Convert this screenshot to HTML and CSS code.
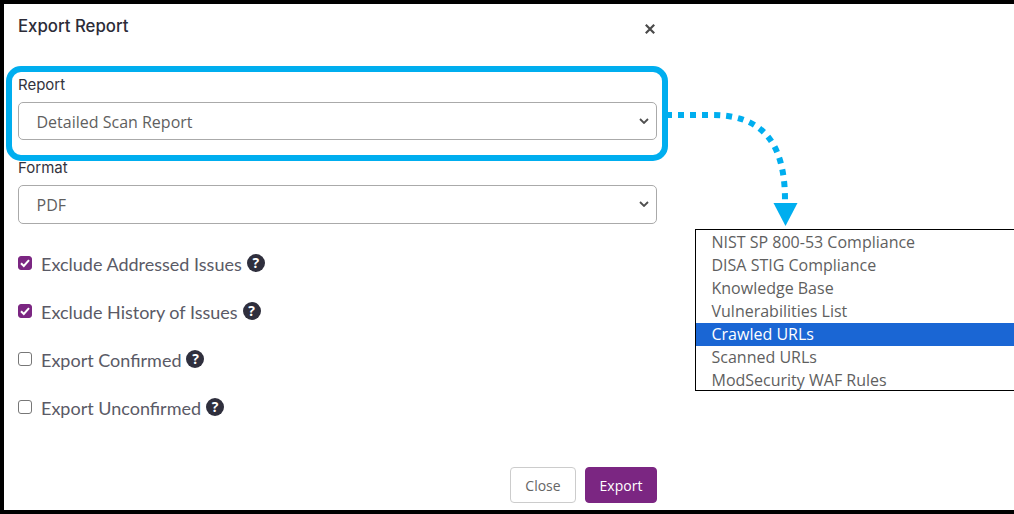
FILE: index.html
```html
<!DOCTYPE html>
<html lang="en">
<head>
<meta charset="utf-8">
<title>Export Report</title>
<link rel="stylesheet" href="styles.css">
</head>
<body>
<div class="frame">
  <div class="modal">
    <header class="modal-head">
      <h1 class="modal-title">Export Report</h1>
      <svg class="close-x" viewBox="0 0 10 10" width="10" height="10"><path d="M.8 .8L9.200 9.200M9.200 .8L.8 9.200"/></svg>
    </header>
    <div class="field field-report">
      <div class="field-label">Report</div>
      <div class="select">Detailed Scan Report
        <svg class="chev" viewBox="0 0 10 6" width="10" height="6"><path d="M1 1L5 5L9 1"/></svg>
      </div>
    </div>
    <div class="field field-format">
      <div class="field-label">Format</div>
      <div class="select select-tall">PDF
        <svg class="chev" viewBox="0 0 10 6" width="10" height="6"><path d="M1 1L5 5L9 1"/></svg>
      </div>
    </div>
    <ul class="checks">
      <li class="check">
        <span class="box on"><svg viewBox="0 0 14 14" width="14" height="14"><path d="M3 7.200L5.800 10L11 4.200"/></svg></span>
        <span class="check-label">Exclude Addressed Issues</span>
        <span class="help">?</span>
      </li>
      <li class="check">
        <span class="box on"><svg viewBox="0 0 14 14" width="14" height="14"><path d="M3 7.200L5.800 10L11 4.200"/></svg></span>
        <span class="check-label">Exclude History of Issues</span>
        <span class="help">?</span>
      </li>
      <li class="check">
        <span class="box"></span>
        <span class="check-label">Export Confirmed</span>
        <span class="help">?</span>
      </li>
      <li class="check">
        <span class="box"></span>
        <span class="check-label">Export Unconfirmed</span>
        <span class="help">?</span>
      </li>
    </ul>
    <footer class="modal-foot">
      <button class="btn btn-close">Close</button>
      <button class="btn btn-export">Export</button>
    </footer>
  </div>

  <div class="callout"></div>
  <svg class="arrow" viewBox="0 0 140 130" width="140" height="130">
    <path class="arrow-line" d="M0 4H44C92 4 117 29 117 89"/>
    <path class="arrow-head" d="M105.500 92H129.500L117.500 115Z"/>
  </svg>
  <ul class="list">
    <li>NIST SP 800-53 Compliance</li>
    <li>DISA STIG Compliance</li>
    <li>Knowledge Base</li>
    <li>Vulnerabilities List</li>
    <li class="active">Crawled URLs</li>
    <li>Scanned URLs</li>
    <li>ModSecurity WAF Rules</li>
  </ul>
</div>
</body>
</html>
```
FILE: styles.css
```css
* { box-sizing: border-box; }
html, body { margin: 0; padding: 0; }
body { width: 1014px; height: 514px; overflow: hidden; background: #fff; }
.frame {
  position: relative;
  width: 1014px;
  height: 514px;
  border: solid #000;
  border-width: 4px 0 4px 4px;
  background: #fff;
}
.modal { width: 653px; padding: 0 0 0 14px; display: flex; flex-direction: column; }
.modal-head { display: flex; justify-content: space-between; align-items: flex-start; height: 70px; padding-top: 12px; }
.modal-title { margin: 0; font: 500 16.800px/21px Inter, sans-serif; color: #2c2c38; }
.close-x { margin: 8px 2px 0 0; }
.close-x path { fill: none; stroke: #4a4a4a; stroke-width: 2.2; }
.field-label { font: 400 15px/20px Inter, sans-serif; color: #33333d; height: 28px; padding-top: 1px; }
.select {
  position: relative;
  display: flex;
  align-items: center;
  height: 38px;
  padding: 2px 0 0 17.500px;
  border: 1px solid #aaa;
  border-radius: 5px;
  font: 400 16px "Open Sans", sans-serif;
  color: #5f5f5f;
}
.select-tall { height: 39px; padding-top: 1px; }
.chev { position: absolute; right: 7px; top: 15px; }
.chev path { fill: none; stroke: #4f4f4f; stroke-width: 1.800; }
.field-report { height: 83px; }
.field-format { height: 96px; }
.checks { list-style: none; margin: 0; padding: 0; display: flex; flex-direction: column; gap: 26px; }
.check { display: flex; align-items: center; height: 22px; font: 400 18px/22px Lato, sans-serif; color: #5a5a66; }
.box { width: 14px; height: 14px; margin: -3px 9px 0 0; border: 1px solid #777; border-radius: 3px; display: block; background: #fff; }
.box svg { display: block; margin: -1px; }
.box svg path { fill: none; stroke: #fff; stroke-width: 2; }
.box.on { background: #7b2682; border-color: #7b2682; }
.help {
  width: 18px; height: 18px; margin: -2px 0 0 5px;
  border-radius: 50%;
  background: #2f2f3d;
  color: #fff;
  font: 700 14px/18px "Open Sans", sans-serif;
  text-align: center;
}
.modal-foot { display: flex; justify-content: flex-end; gap: 9px; margin-top: 48px; }
.btn { height: 36px; border-radius: 4px; font: 400 14px "Open Sans", sans-serif; padding: 0; }
.btn-close { width: 66px; background: #fff; border: 1px solid #ccc; color: #666; }
.btn-export { width: 72px; background: #7b2682; border: 1px solid #7b2682; color: #fff; }
.callout {
  position: absolute; left: 2px; top: 62px; width: 662px; height: 95px;
  border: 6px solid #00aeef; border-radius: 15px;
}
.arrow { position: absolute; left: 664px; top: 107px; }
.arrow-line { fill: none; stroke: #00aeef; stroke-width: 6; stroke-dasharray: 6 6; stroke-dashoffset: 2; }
.arrow-head { fill: #00aeef; }
.list {
  position: absolute; left: 691px; top: 225px; width: 319px; height: 162px;
  margin: 0; padding: 1px 0 0; list-style: none;
  border: solid #000; border-width: 1.500px 0 1.500px 1.500px;
  background: #fff;
  font: 400 16px/23px "Open Sans", sans-serif;
  color: #5f5f5f;
}
.list li { height: 23px; padding-left: 15.500px; white-space: nowrap; overflow: hidden; }
.list li.active { background: #1a66d4; color: #fff; }
```
